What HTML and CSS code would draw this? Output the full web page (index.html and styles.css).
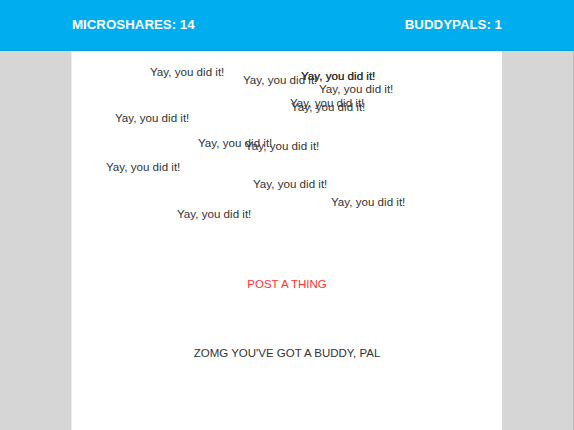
FILE: index.html
```html
<!DOCTYPE html>
<html lang="en">
<head>
<meta charset="utf-8">
<title>Microshares</title>
<link rel="stylesheet" href="styles.css">
</head>
<body>
<header class="topbar">
  <div class="topbar-inner">
    <span class="stat">MICROSHARES: 14</span>
    <span class="stat">BUDDYPALS: 1</span>
  </div>
</header>
<main class="column">
  <div class="canvas">
    <span class="share" style="left:78px;top:13.5px">Yay, you did it!</span>
    <span class="share" style="left:171px;top:21.5px">Yay, you did it!</span>
    <span class="share" style="left:229px;top:17.5px">Yay, you did it!</span>
    <span class="share" style="left:229px;top:17.5px">Yay, you did it!</span>
    <span class="share" style="left:247px;top:30.5px">Yay, you did it!</span>
    <span class="share" style="left:218px;top:44.5px">Yay, you did it!</span>
    <span class="share" style="left:219px;top:48.5px">Yay, you did it!</span>
    <span class="share" style="left:43px;top:59.5px">Yay, you did it!</span>
    <span class="share" style="left:126px;top:84.5px">Yay, you did it!</span>
    <span class="share" style="left:173px;top:87.5px">Yay, you did it!</span>
    <span class="share" style="left:34px;top:108.5px">Yay, you did it!</span>
    <span class="share" style="left:181px;top:125.5px">Yay, you did it!</span>
    <span class="share" style="left:259px;top:143.5px">Yay, you did it!</span>
    <span class="share" style="left:105px;top:155.5px">Yay, you did it!</span>
  </div>
  <div class="post">POST A THING</div>
  <div class="buddy">ZOMG YOU'VE GOT A BUDDY, PAL</div>
</main>
</body>
</html>
```
FILE: styles.css
```css
html, body {
  margin: 0;
  padding: 0;
}
body {
  background: #d6d6d6;
  font-family: "Liberation Sans", Arial, sans-serif;
  min-height: 100vh;
  box-shadow: inset -1px 0 0 #b8b8b8;
}
.topbar {
  background: #00adee;
  height: 51px;
  border-bottom: 1px solid #0aa0d8;
  box-sizing: border-box;
}
.topbar-inner {
  width: 430px;
  margin: 0 auto;
  height: 100%;
  display: flex;
  justify-content: space-between;
  align-items: center;
  padding-bottom: 1px;
  box-sizing: border-box;
}
.stat {
  color: #ffffff;
  font-weight: bold;
  font-size: 13.3px;
}
.column {
  width: 430px;
  margin: 0 auto;
  background: #ffffff;
  min-height: calc(100vh - 51px);
  box-shadow: -1px 0 0 #ececec;
}
.canvas {
  position: relative;
  height: 226px;
}
.share {
  position: absolute;
  font-size: 11.6px;
  line-height: 13px;
  color: #333333;
  white-space: nowrap;
}
.post {
  text-align: center;
  font-size: 11.5px;
  line-height: 14px;
  color: #ff3333;
}
.buddy {
  margin-top: 55px;
  text-align: center;
  font-size: 11.5px;
  line-height: 14px;
  color: #333333;
}
```
